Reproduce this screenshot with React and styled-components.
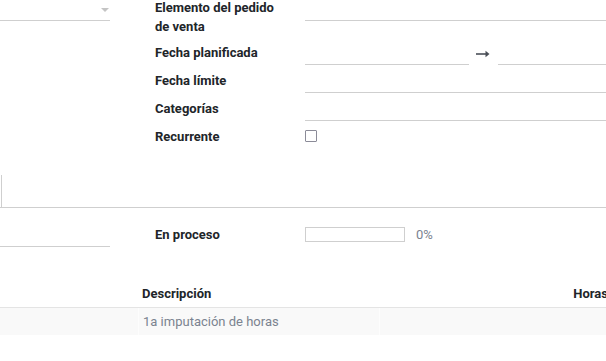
import styled, { createGlobalStyle } from 'styled-components';

const GlobalStyle = createGlobalStyle`
  html, body {
    margin: 0;
    padding: 0;
    background: #ffffff;
    overflow: hidden;
  }
  body {
    font-family: Roboto, "Noto Sans", sans-serif;
    font-size: 13px;
    color: #212529;
  }
`;

const Sheet = styled.div`
  width: 620px;
  margin-top: -2px;
`;

const Section = styled.div`
  display: flex;
  gap: 45px;
`;

const LeftCol = styled.div`
  width: 110px;
  flex-shrink: 0;
`;

const Select = styled.div`
  position: relative;
  height: ${({ $h }) => $h}px;
  border-bottom: 1px solid #cfcfcf;
  box-sizing: border-box;
`;

const Caret = styled.span`
  position: absolute;
  right: 1px;
  top: 10px;
  width: 0;
  height: 0;
  border-left: 4px solid transparent;
  border-right: 4px solid transparent;
  border-top: 4px solid #c4c4c4;
`;

const Group = styled.div`
  flex: 1;
  display: flex;
  flex-direction: column;
`;

const Field = styled.div`
  display: grid;
  grid-template-columns: 150px 1fr;
  align-items: start;
  height: ${({ $h }) => $h}px;
`;

const Label = styled.div`
  font-weight: 700;
  line-height: 19px;
  color: #212529;
  padding-top: ${({ $top }) => $top || 0}px;
`;

const Value = styled.div`
  display: flex;
  align-items: flex-start;
  padding-top: ${({ $top }) => $top || 0}px;
`;

const Input = styled.div`
  height: ${({ $h }) => $h || 20}px;
  flex: ${({ $w }) => ($w ? `0 0 ${$w}px` : '1')};
  border-bottom: 1px solid #cfcfcf;
  box-sizing: border-box;
`;

const Arrow = styled.svg`
  width: 14px;
  height: 8px;
  margin: 5px 8px 0 7px;
`;

const Checkbox = styled.span`
  display: block;
  width: 12px;
  height: 12px;
  border: 1px solid #8b8b98;
  border-radius: 1px;
  box-sizing: border-box;
`;

const Notebook = styled.div`
  margin-top: 25px;
  height: 33px;
  border-bottom: 1px solid #cfcfcf;
  box-sizing: border-box;
  display: flex;
`;

const Tab = styled.div`
  margin-left: 1px;
  width: 1px;
  border-left: 1px solid #cfcfcf;
`;

const Progress = styled.div`
  width: 100px;
  height: 15px;
  border: 1px solid #cfcfcf;
  box-sizing: border-box;
  margin-top: 2px;
`;

const Muted = styled.span`
  color: #7b8390;
  margin-left: 11px;
  line-height: 19px;
`;

const Table = styled.div`
  margin-top: 33px;
  width: 612px;
`;

const Row = styled.div`
  display: grid;
  grid-template-columns: 138px 241px 1fr;
  height: ${({ $h }) => $h}px;
  box-sizing: border-box;
  background: ${({ $head }) => ($head ? '#ffffff' : '#f9f9f9')};
  border-bottom: ${({ $head }) => ($head ? '1px solid #e4e4e4' : 'none')};
  box-shadow: ${({ $head }) => ($head ? '0 1px 2px rgba(0,0,0,0.05)' : 'none')};
  position: relative;
`;

const Cell = styled.div`
  display: flex;
  align-items: center;
  justify-content: ${({ $right }) => ($right ? 'flex-end' : 'flex-start')};
  padding: 0 4px;
  white-space: nowrap;
  font-weight: ${({ $head }) => ($head ? 700 : 400)};
  color: ${({ $head }) => ($head ? '#212529' : '#7b8390')};
  border-left: ${({ $sep }) => ($sep ? '1px solid #fdfdfd' : 'none')};
`;

export default function App() {
  return (
    <>
      <GlobalStyle />
      <Sheet>
        <Section>
          <LeftCol>
            <Select $h={23}>
              <Caret />
            </Select>
          </LeftCol>
          <Group>
            <Field $h={40}>
              <Label>
                Elemento del pedido
                <br />
                de venta
              </Label>
              <Value>
                <Input $h={23} />
              </Value>
            </Field>
            <Field $h={28}>
              <Label $top={4.5}>Fecha planificada</Label>
              <Value $top={7}>
                <Input $w={164} />
                <Arrow viewBox="0 0 14 8">
                  <path d="M0 3.2h10.5v1.6H0z" fill="#4a4f57" />
                  <path d="M9.5 0.8L13.5 4L9.5 7.2z" fill="#4a4f57" />
                </Arrow>
                <Input />
              </Value>
            </Field>
            <Field $h={28}>
              <Label $top={4.5}>Fecha límite</Label>
              <Value $top={7}>
                <Input />
              </Value>
            </Field>
            <Field $h={28}>
              <Label $top={4.5}>Categorías</Label>
              <Value $top={7}>
                <Input />
              </Value>
            </Field>
            <Field $h={28}>
              <Label $top={4.5}>Recurrente</Label>
              <Value $top={8}>
                <Checkbox />
              </Value>
            </Field>
          </Group>
        </Section>

        <Notebook>
          <Tab />
        </Notebook>

        <Section>
          <LeftCol>
            <Select $h={39} />
          </LeftCol>
          <Group>
            <Field $h={36}>
              <Label $top={16.5}>En proceso</Label>
              <Value $top={16.5}>
                <Progress />
                <Muted>0%</Muted>
              </Value>
            </Field>
          </Group>
        </Section>

        <Table>
          <Row $head $h={28}>
            <Cell $head />
            <Cell $head>Descripción</Cell>
            <Cell $head $right>Horas</Cell>
          </Row>
          <Row $h={27}>
            <Cell />
            <Cell $sep>1a imputación de horas</Cell>
            <Cell $sep />
          </Row>
        </Table>
      </Sheet>
    </>
  );
}
